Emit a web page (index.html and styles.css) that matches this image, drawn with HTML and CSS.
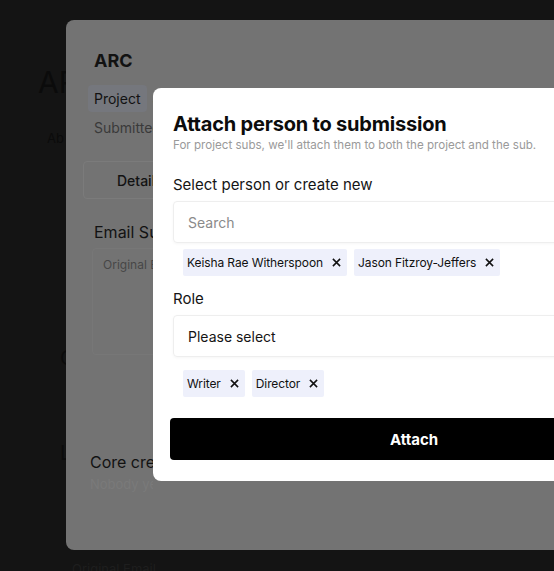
FILE: index.html
```html
<!DOCTYPE html>
<html>
<head>
	<meta charset="UTF-8">
	<title>Attach person</title>
	<link rel="stylesheet" href="styles.css">
</head>
<body>
	<div class="page">
		<div class="page-title">AR</div>
		<div class="page-sub">Ab</div>
		<div class="page-c">C</div>
		<div class="page-l">L</div>
	</div>
	<div class="page-foot">Original Email</div>

	<!-- submission panel under overlay -->
	<div class="panel">
		<div class="panel-col">
			<div class="panel-title">ARC</div>
			<div class="panel-nav"><span class="nav-on">Project</span><span>Sub</span></div>
			<div class="panel-meta">Submitted</div>
			<div class="panel-tabs"><span>Details</span></div>
			<div class="panel-label">Email Subject</div>
			<div class="panel-box">Original Email</div>
			<div class="panel-core">Core creatives</div>
			<div class="panel-core-sub">Nobody yet</div>
		</div>
	</div>

	<!-- attach dialog -->
	<div class="dialog">
		<div class="dialog-title">Attach person to submission</div>
		<div class="dialog-sub">For project subs, we'll attach them to both the project and the sub.</div>

		<div class="field-label">Select person or create new</div>
		<div class="field-input muted">Search</div>
		<div class="chips">
			<span class="chip">Keisha Rae Witherspoon <svg viewBox="0 0 10 10"><path d="M1 1l8 8M9 1l-8 8"/></svg></span>
			<span class="chip">Jason Fitzroy-Jeffers <svg viewBox="0 0 10 10"><path d="M1 1l8 8M9 1l-8 8"/></svg></span>
		</div>

		<div class="field-label role">Role</div>
		<div class="field-input">Please select</div>
		<div class="chips roles">
			<span class="chip">Writer <svg viewBox="0 0 10 10"><path d="M1 1l8 8M9 1l-8 8"/></svg></span>
			<span class="chip">Director <svg viewBox="0 0 10 10"><path d="M1 1l8 8M9 1l-8 8"/></svg></span>
		</div>

		<button class="attach">Attach</button>
	</div>
</body>
</html>
```

FILE: styles.css
```css
body,div,span{
	margin: 0;
	padding: 0;
}
html,body{
	height: 100%;
}
body{
	background: #141414;
	font-family: Inter, "Noto Sans", sans-serif;
	color: #111;
	overflow: hidden;
	position: relative;
}

/* page behind everything */
.page{
	width: 66px;
	overflow: hidden;
	white-space: nowrap;
	padding: 64px 0 0 38px;
	box-sizing: border-box;
	color: #0b0b0b;
}
.page-title{
	font-size: 30px;
	line-height: 36px;
}
.page-sub{
	font-size: 13px;
	margin: 30px 0 0 9px;
}
.page-c{
	font-size: 20px;
	margin: 200px 0 0 22px;
}
.page-l{
	font-size: 20px;
	margin: 71px 0 0 22px;
}
.page-foot{
	font-size: 13px;
	margin: 96px 0 0 72px;
	color: #1e1e1e;
}

/* panel dimmed by overlay */
.panel{
	position: absolute;
	left: 66px;
	top: 20px;
	width: 560px;
	height: 530px;
	background: #737373;
	border-radius: 8px;
	color: #121212;
}
.panel-col{
	width: 87px;
	height: 100%;
	overflow: hidden;
	white-space: nowrap;
	padding: 30px 0 0 28px;
	box-sizing: border-box;
}
.panel-title{
	font-size: 18px;
	font-weight: 700;
	line-height: 22px;
}
.panel-nav{
	display: flex;
	margin: 13px 0 0 -6px;
	font-size: 14px;
	line-height: 27px;
}
.panel-nav span{
	padding: 0 6px;
}
.nav-on{
	background: #75777d;
	border-radius: 4px;
}
.panel-meta{
	margin-top: 6px;
	font-size: 14px;
	line-height: 20px;
	color: #3a3a3a;
}
.panel-tabs{
	margin: 23px 0 0 -11px;
	width: 300px;
	height: 36px;
	border: 1px solid #7b7b7b;
	border-radius: 4px;
	display: flex;
	align-items: center;
	padding-left: 33px;
	font-size: 14px;
	font-weight: 500;
}
.panel-label{
	margin-top: 23px;
	font-size: 16px;
	line-height: 20px;
}
.panel-box{
	margin: 6px 0 0 -2px;
	width: 300px;
	height: 107px;
	border: 1px solid #777;
	border-radius: 4px;
	padding: 8px 10px;
	box-sizing: border-box;
	font-size: 12px;
	color: #474747;
}
.panel-core{
	margin: 97px 0 0 -4px;
	font-size: 16px;
	line-height: 20px;
}
.panel-core-sub{
	margin: 4px 0 0 -4px;
	font-size: 13px;
	color: #7a7a7a;
}

/* dialog */
.dialog{
	position: absolute;
	left: 153px;
	top: 88px;
	width: 525px;
	background: #fff;
	border-radius: 8px;
	padding: 23px 20px 21px 20px;
	box-sizing: border-box;
}
.dialog-title{
	font-size: 20px;
	font-weight: 700;
	line-height: 26px;
	letter-spacing: -0.2px;
	color: #0c0c0c;
}
.dialog-sub{
	margin-top: 1px;
	font-size: 11.6px;
	line-height: 14px;
	color: #9a9a9a;
}
.field-label{
	margin-top: 23px;
	font-size: 15px;
	line-height: 20px;
	color: #151515;
}
.field-label.role{
	margin-top: 13px;
}
.field-input{
	margin-top: 6px;
	height: 40px;
	border: 1px solid #eeeeee;
	border-radius: 4px;
	box-shadow: 0 1px 3px rgba(0,0,0,0.04);
	display: flex;
	align-items: center;
	padding-left: 14px;
	font-size: 14px;
	color: #151515;
}
.field-input.muted{
	color: #8a8a8a;
}
.chips{
	display: flex;
	gap: 7px;
	margin: 6px 0 0 10px;
}
.chips.roles{
	margin-top: 13px;
}
.chip{
	display: flex;
	align-items: center;
	gap: 9px;
	height: 27px;
	padding: 0 6px 0 4px;
	background: #eef0fb;
	border-radius: 2px;
	font-size: 12px;
	letter-spacing: -0.1px;
	color: #111;
}
.chip svg{
	width: 9px;
	height: 9px;
	fill: none;
	stroke: #111;
	stroke-width: 1.7;
}
.attach{
	display: block;
	margin: 21px 0 0 -3px;
	width: 488px;
	height: 42px;
	background: #000;
	color: #fff;
	border: none;
	border-radius: 4px;
	font-family: Inter, "Noto Sans", sans-serif;
	font-size: 15px;
	font-weight: 700;
}
```
